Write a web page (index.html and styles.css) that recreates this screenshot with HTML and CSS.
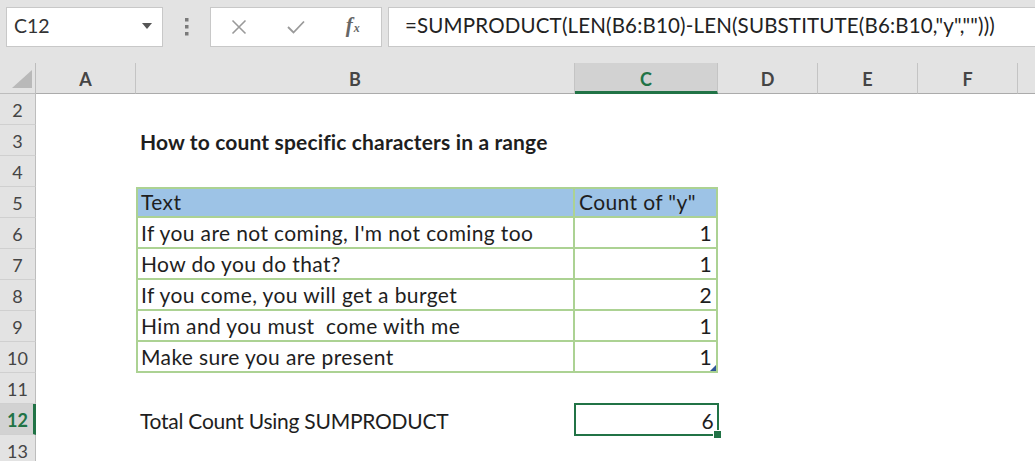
FILE: index.html
```html
<!DOCTYPE html>
<html>
<head>
<meta charset="utf-8">
<link rel="stylesheet" href="styles.css">
</head>
<body>
<div class="app">
  <div class="toolbar">
    <div class="namebox">
      <span class="nb-text">C12</span>
      <svg class="caret" width="10" height="6" viewBox="0 0 10 6"><path d="M0 0 L10 0 L5 6 Z" fill="#555"/></svg>
    </div>
    <div class="grip">
      <svg width="4" height="18" viewBox="0 0 4 18"><rect x="0" y="0" width="3.5" height="3.5" fill="#7a7a7a"/><rect x="0" y="7" width="3.5" height="3.5" fill="#7a7a7a"/><rect x="0" y="14" width="3.5" height="3.5" fill="#7a7a7a"/></svg>
    </div>
    <div class="fnbox">
      <div class="fn-slot">
        <svg width="16" height="16" viewBox="0 0 16 16"><path d="M1.5 1.5 L14.5 14.5 M14.5 1.5 L1.5 14.5" stroke="#9a9a9a" stroke-width="1.6" fill="none"/></svg>
      </div>
      <div class="fn-slot">
        <svg width="18" height="14" viewBox="0 0 18 14"><path d="M1 7 L6.5 12.5 L17 1.5" stroke="#9a9a9a" stroke-width="1.8" fill="none"/></svg>
      </div>
      <div class="fn-slot"><span class="fx">f<span class="fx-x">x</span></span></div>
    </div>
    <div class="formula">=SUMPRODUCT(LEN(B6:B10)-LEN(SUBSTITUTE(B6:B10,"y","")))</div>
  </div>

  <div class="sheet">
    <div class="row hdr">
      <div class="corner"><svg width="20" height="18" viewBox="0 0 20 18"><path d="M20 0 L20 18 L0 18 Z" fill="#b9b9b9"/></svg></div>
      <div class="ch">A</div>
      <div class="ch">B</div>
      <div class="ch sel">C</div>
      <div class="ch">D</div>
      <div class="ch">E</div>
      <div class="ch">F</div>
      <div class="ch last"></div>
    </div>
    <div class="row"><div class="rh">2</div></div>
    <div class="row"><div class="rh">3</div><div class="cell colB title">How to count specific characters in a range</div></div>
    <div class="row"><div class="rh">4</div></div>
    <div class="row"><div class="rh">5</div><div class="cell colB tb tb-b tb-top th">Text</div><div class="cell colC tb tb-top th">Count of "y"</div></div>
    <div class="row"><div class="rh">6</div><div class="cell colB tb tb-b">If you are not coming, I'm not coming too</div><div class="cell colC tb num">1</div></div>
    <div class="row"><div class="rh">7</div><div class="cell colB tb tb-b">How do you do that?</div><div class="cell colC tb num">1</div></div>
    <div class="row"><div class="rh">8</div><div class="cell colB tb tb-b">If you come, you will get a burget</div><div class="cell colC tb num">2</div></div>
    <div class="row"><div class="rh">9</div><div class="cell colB tb tb-b">Him and you must&nbsp; come with me</div><div class="cell colC tb num">1</div></div>
    <div class="row"><div class="rh">10</div><div class="cell colB tb tb-b">Make sure you are present</div><div class="cell colC tb num tb-end">1</div></div>
    <div class="row"><div class="rh">11</div></div>
    <div class="row"><div class="rh sel">12</div><div class="cell colB total">Total Count Using SUMPRODUCT</div><div class="cell colC num active">6</div></div>
    <div class="row"><div class="rh">13</div></div>
  </div>
</div>
</body>
</html>
```

FILE: styles.css
```css
* { box-sizing: border-box; }
html, body { margin: 0; padding: 0; }
body {
  width: 1035px;
  height: 461px;
  overflow: hidden;
  background: #ffffff;
  font-family: Lato, "Liberation Sans", sans-serif;
  color: #222;
}
.app { width: 1035px; }

.toolbar {
  height: 63px;
  background: #e3e3e3;
  display: flex;
  align-items: flex-start;
  padding: 7px 0 0 6px;
}
.namebox {
  width: 157px;
  height: 40px;
  background: #fff;
  border: 1px solid #c8c8c8;
  display: flex;
  align-items: center;
  justify-content: space-between;
  padding: 0 10px 4px 7px;
}
.nb-text { font-size: 19.5px; color: #333; }
.caret { margin-top: 2px; }
.grip {
  width: 47px;
  height: 40px;
  display: flex;
  align-items: center;
  justify-content: center;
}
.fnbox {
  width: 172px;
  height: 40px;
  background: #fff;
  border: 1px solid #c8c8c8;
  display: flex;
}
.fn-slot {
  flex: 1;
  display: flex;
  align-items: center;
  justify-content: center;
}
.fx {
  font-family: "Liberation Serif", serif;
  font-style: italic;
  font-weight: 700;
  font-size: 21px;
  color: #666;
  line-height: 1;
  margin-bottom: 3px;
}
.fx-x { font-size: 12px; margin-left: 1px; }
.formula {
  flex: 1;
  margin-left: 6px;
  height: 40px;
  background: #fff;
  border: 1px solid #c8c8c8;
  border-right: none;
  padding: 0 0 4px 16px;
  display: flex;
  align-items: center;
  font-size: 20.5px;
  letter-spacing: 0.17px;
  color: #222;
  white-space: nowrap;
}

.sheet { background: #fff; }
.row {
  display: grid;
  grid-template-columns: 36px 100px 439px 143px 100px 100px 100px 1fr;
  height: 31px;
}
.row.hdr { background: #e3e3e3; }
.corner {
  border-right: 1px solid #bdbdbd;
  border-bottom: 1px solid #bdbdbd;
  display: flex;
  align-items: flex-end;
  justify-content: flex-end;
  padding: 0 3px 5px 0;
}
.ch {
  border-right: 1px solid #c4c4c4;
  border-bottom: 1px solid #ababab;
  display: flex;
  align-items: center;
  justify-content: center;
  font-size: 18px;
  font-weight: 700;
  color: #454545;
  padding-top: 2px;
}
.ch.last { border-right: none; }
.ch.sel {
  background: #d2d2d2;
  color: #217346;
  border-bottom: 3px solid #217346;
  padding-top: 4px;
}
.rh {
  grid-column: 1;
  background: #e3e3e3;
  border-right: 1px solid #bdbdbd;
  border-bottom: 1px solid #d0d0d0;
  display: flex;
  align-items: center;
  justify-content: center;
  font-size: 18px;
  color: #454545;
  padding-top: 1px;
}
.rh.sel {
  background: #d2d2d2;
  color: #217346;
  font-weight: 700;
  border-right: 3px solid #217346;
  padding-left: 2px;
}

.cell {
  display: flex;
  align-items: flex-end;
  padding: 0 5px 2px 4px;
  font-size: 21px;
  letter-spacing: 0.38px;
  color: #1e1e1e;
  white-space: nowrap;
  position: relative;
}
.colB { grid-column: 3; }
.colC { grid-column: 4; }
.title { font-weight: 700; letter-spacing: 0.15px; }
.total { letter-spacing: -0.25px; }
.num { justify-content: flex-end; padding-right: 4px; }
.tb {
  border-right: 2px solid #acd293;
  border-bottom: 2px solid #acd293;
}
.tb-b { border-left: 2px solid #acd293; padding-left: 3px; }
.tb-top { border-top: 2px solid #acd293; }
.th { background: #9dc3e6; }
.tb-end::after {
  content: "";
  position: absolute;
  right: 0;
  bottom: 0;
  width: 0;
  height: 0;
  border-left: 6px solid transparent;
  border-bottom: 6px solid #2e5597;
}
.active {
  outline: 2px solid #217346;
  outline-offset: -1px;
}
.active::after {
  content: "";
  position: absolute;
  right: -4px;
  bottom: -4px;
  width: 7px;
  height: 7px;
  background: #217346;
  border: 1px solid #fff;
}
```
